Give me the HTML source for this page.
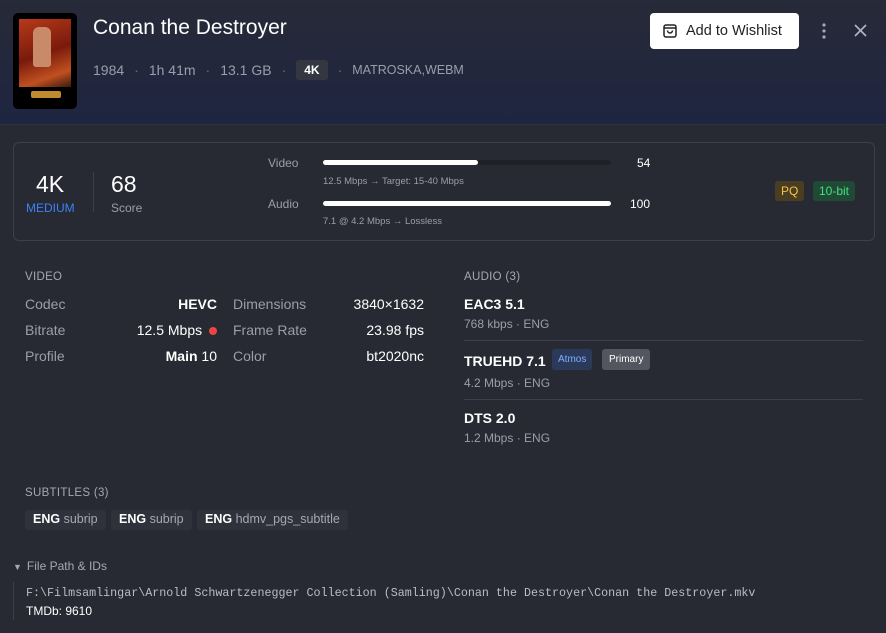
<!DOCTYPE html>
<html><head><meta charset="utf-8">
<style>
*{margin:0;padding:0;box-sizing:border-box}
body{width:886px;height:633px;overflow:hidden;background:#282a33;font-family:"Liberation Sans",sans-serif;color:#e8e9ee;position:relative}
.hdr{position:absolute;left:0;top:0;width:886px;height:125px;background:linear-gradient(180deg,#272a38 0%,#1e2540 100%);border-bottom:1px solid #2e3140}
.poster{position:absolute;left:13px;top:13px;width:64px;height:96px;background:#000;border-radius:5px;overflow:hidden}
.poster .img{position:absolute;left:6px;top:6px;width:52px;height:68px;background:linear-gradient(160deg,#b83a1a,#7a1a0c 50%,#c05020 80%,#3a1a10)}
.poster .fig{position:absolute;left:20px;top:14px;width:18px;height:40px;background:#c98a6a;border-radius:6px 6px 3px 3px}
.poster .logo{position:absolute;left:18px;top:78px;width:30px;height:7px;background:#c08a30;border-radius:2px}
.t{position:absolute;left:93px;top:16px;font-size:21px;color:#fff}
.meta{position:absolute;left:93px;top:60px;font-size:14px;color:#9a9eab;display:flex;align-items:center;gap:0}
.meta .d{margin:0 10px;color:#6a6e7b}
.meta .k{background:#343641;color:#fff;font-weight:bold;font-size:12px;padding:3px 8px;border-radius:3px}
.meta .m{font-size:12.5px}
.wish{position:absolute;left:650px;top:13px;width:149px;height:36px;background:#fff;border-radius:4px;color:#222;font-size:14.5px;display:flex;align-items:center;padding-left:36px}
.wish svg{position:absolute;left:12px;top:10px}
.dots{position:absolute;left:821px;top:23px}
.x{position:absolute;left:853px;top:23px}
.card{position:absolute;left:13px;top:142px;width:862px;height:99px;border:1px solid #3d404c;border-radius:6px}
.big{position:absolute;font-size:23px;color:#fff}
.lbl{position:absolute;font-size:12px}
.bar{position:absolute;left:323px;height:5px;width:288px;background:#1f2129;border-radius:3px}
.bar i{display:block;height:5px;background:#fff;border-radius:3px}
.sm{position:absolute;font-size:9.5px;color:#9a9eab}
.tag{position:absolute;font-size:12px;padding:3px 6px;border-radius:3px}
.sec{position:absolute;font-size:11.5px;color:#a4a8b4;letter-spacing:.3px}
.r{position:absolute;font-size:14px}
.k2{color:#9a9eab}
.v{color:#fff;text-align:right}
.aname{position:absolute;left:464px;font-size:14px;font-weight:bold;color:#fff}
.asub{position:absolute;left:464px;font-size:12px;color:#9a9eab}
.hr{position:absolute;left:464px;width:399px;height:1px;background:#3d404c}
.chip{position:absolute;top:510px;height:20px;background:#2f313b;border-radius:3px;font-size:12.5px;color:#a4a8b4;padding:2px 8px}
.chip b{color:#fff;font-weight:bold}
.mono{position:absolute;left:26px;top:583px;font-family:"Liberation Mono",monospace;font-size:11.7px;color:#b8bcc6}
</style></head><body>
<div class="hdr"></div>
<div class="poster"><div class="img"></div><div class="fig"></div><div class="logo"></div></div>
<div class="t">Conan the Destroyer</div>
<div class="meta"><span>1984</span><span class="d">·</span><span>1h 41m</span><span class="d">·</span><span>13.1 GB</span><span class="d">·</span><span class="k">4K</span><span class="d">·</span><span class="m">MATROSKA,WEBM</span></div>
<div class="wish"><svg width="16" height="16" viewBox="0 0 16 16" fill="none" stroke="#222" stroke-width="1.5"><rect x="2" y="2" width="12" height="12" rx="2"/><path d="M2 5h12M5.5 7.5a2.5 2.5 0 0 0 5 0"/></svg>Add to Wishlist</div>
<svg class="dots" width="6" height="16" viewBox="0 0 6 16"><circle cx="3" cy="2" r="1.6" fill="#a4a8b4"/><circle cx="3" cy="8" r="1.6" fill="#a4a8b4"/><circle cx="3" cy="14" r="1.6" fill="#a4a8b4"/></svg>
<svg class="x" width="15" height="15" viewBox="0 0 15 15"><path d="M2 2L13 13M13 2L2 13" stroke="#b0b4be" stroke-width="1.7"/></svg>

<div class="card"></div>
<div class="big" style="left:36px;top:171px">4K</div>
<div class="lbl" style="left:26px;top:201px;color:#3b82f6">MEDIUM</div>
<div style="position:absolute;left:93px;top:172px;width:1px;height:40px;background:#3d404c"></div>
<div class="big" style="left:111px;top:171px">68</div>
<div class="lbl" style="left:111px;top:201px;color:#9a9eab">Score</div>
<div class="lbl" style="left:268px;top:156px;color:#9a9eab">Video</div>
<div class="bar" style="top:160px"><i style="width:155px"></i></div>
<div class="lbl" style="left:637px;top:156px;color:#fff">54</div>
<div class="sm" style="left:323px;top:176px">12.5 Mbps → Target: 15-40 Mbps</div>
<div class="lbl" style="left:268px;top:197px;color:#9a9eab">Audio</div>
<div class="bar" style="top:201px"><i style="width:288px"></i></div>
<div class="lbl" style="left:630px;top:197px;color:#fff">100</div>
<div class="sm" style="left:323px;top:216px">7.1 @ 4.2 Mbps → Lossless</div>
<div class="tag" style="left:775px;top:181px;background:#4a3e22;color:#f5c542">PQ</div>
<div class="tag" style="left:813px;top:181px;background:#1f4a36;color:#4ade80">10-bit</div>

<div class="sec" style="left:25px;top:271px">VIDEO</div>
<div class="r k2" style="left:25px;top:296px">Codec</div><div class="r v" style="left:100px;width:117px;top:296px;font-weight:bold">HEVC</div>
<div class="r k2" style="left:233px;top:296px">Dimensions</div><div class="r v" style="left:320px;width:104px;top:296px">3840×1632</div>
<div class="r k2" style="left:25px;top:322px">Bitrate</div><div class="r v" style="left:100px;width:117px;top:322px">12.5 Mbps <span style="display:inline-block;width:8px;height:8px;border-radius:50%;background:#ef4444;margin-left:3px"></span></div>
<div class="r k2" style="left:233px;top:322px">Frame Rate</div><div class="r v" style="left:320px;width:104px;top:322px">23.98 fps</div>
<div class="r k2" style="left:25px;top:348px">Profile</div><div class="r v" style="left:100px;width:117px;top:348px"><b>Main</b> 10</div>
<div class="r k2" style="left:233px;top:348px">Color</div><div class="r v" style="left:320px;width:104px;top:348px">bt2020nc</div>

<div class="sec" style="left:464px;top:271px">AUDIO (3)</div>
<div class="aname" style="top:296px">EAC3 5.1</div>
<div class="asub" style="top:317px">768 kbps · ENG</div>
<div class="hr" style="top:340px"></div>
<div class="aname" style="top:353px">TRUEHD 7.1</div>
<div class="tag" style="left:552px;top:349px;background:#2c3a5a;color:#7fb0ff;font-size:10px;padding:5px 6px">Atmos</div>
<div class="tag" style="left:602px;top:349px;background:#53555f;color:#fff;font-size:10px;padding:5px 7px">Primary</div>
<div class="asub" style="top:376px">4.2 Mbps · ENG</div>
<div class="hr" style="top:399px"></div>
<div class="aname" style="top:410px">DTS 2.0</div>
<div class="asub" style="top:431px">1.2 Mbps · ENG</div>

<div class="sec" style="left:25px;top:487px">SUBTITLES (3)</div>
<div class="chip" style="left:25px"><b>ENG</b> subrip</div>
<div class="chip" style="left:111px"><b>ENG</b> subrip</div>
<div class="chip" style="left:197px"><b>ENG</b> hdmv_pgs_subtitle</div>

<div style="position:absolute;left:13px;top:559px;font-size:12px;color:#a4a8b4"><span style="font-size:9px;margin-right:5px">▼</span>File Path &amp; IDs</div>
<div style="position:absolute;left:13px;top:582px;width:1px;height:38px;background:#3d404c"></div>
<div class="mono" style="top:586px">F:\Filmsamlingar\Arnold Schwartzenegger Collection (Samling)\Conan the Destroyer\Conan the Destroyer.mkv</div>
<div style="position:absolute;left:26px;top:604px;font-size:12px;color:#fff">TMDb: 9610</div>
</body></html>
